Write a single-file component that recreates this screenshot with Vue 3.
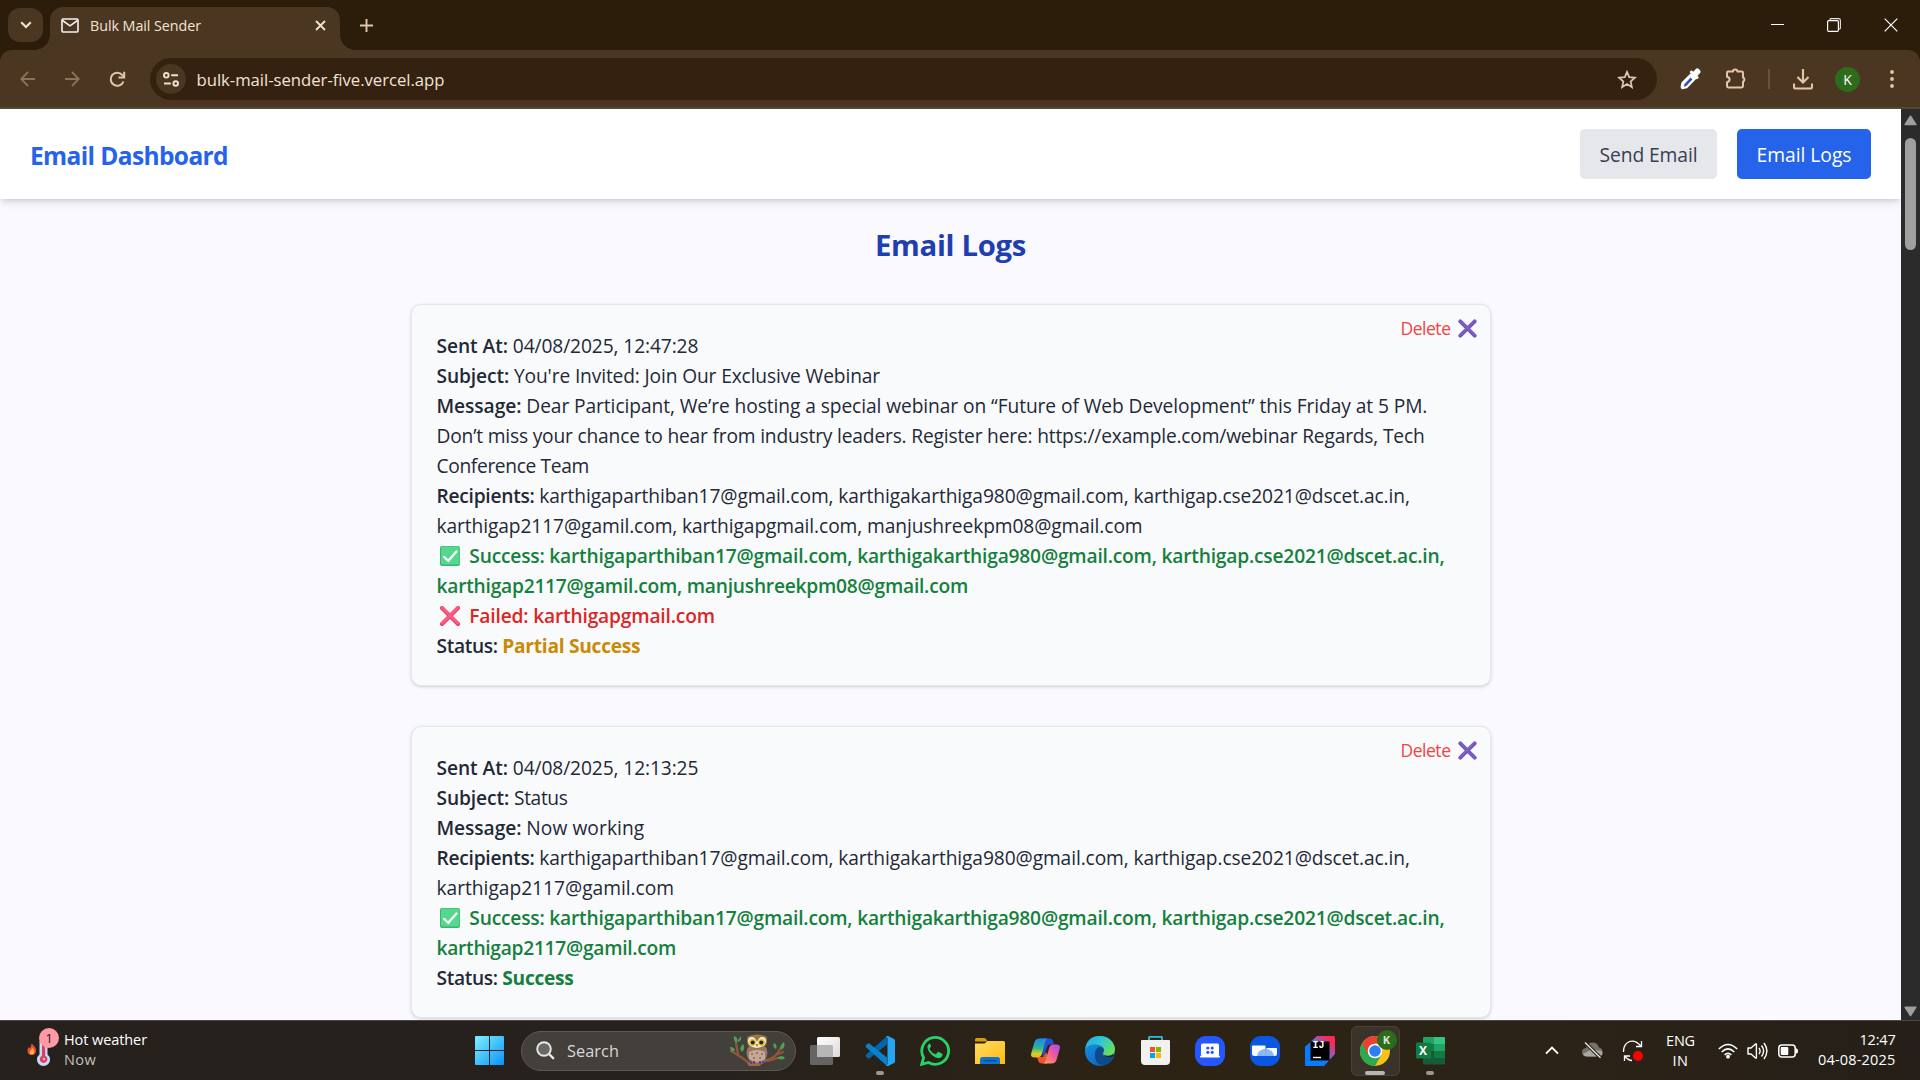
<script setup>
// Spreads the letters of a run so that it takes exactly the given width.
const vFit = {
  mounted(el, { value }) {
    const natural = el.getBoundingClientRect().width
    const count = Array.from(el.textContent).length
    el.style.letterSpacing = `${(value - natural) / count}px`
    el.style.width = `${value}px`
  }
}

const run = (text, w, kind = 'plain') => ({ text, w, kind })

const logs = [
  [
    [run('Sent At: ', 76.3, 'label'), run('04/08/2025, 12:47:28', 185.5)],
    [run('Subject: ', 77.5, 'label'), run("You're Invited: Join Our Exclusive Webinar", 366)],
    [
      run('Message: ', 89.8, 'label'),
      run('Dear Participant, We’re hosting a special webinar on “Future of Web Development” this Friday at 5 PM.', 901)
    ],
    [run('Don’t miss your chance to hear from industry leaders. Register here: https://example.com/webinar Regards, Tech', 988)],
    [run('Conference Team', 152.5)],
    [
      run('Recipients: ', 102.8, 'label'),
      run('karthigaparthiban17@gmail.com, karthigakarthiga980@gmail.com, karthigap.cse2021@dscet.ac.in,', 870.5)
    ],
    [run('karthigap2117@gamil.com, karthigapgmail.com, manjushreekpm08@gmail.com', 706)],
    [
      run('check', 0, 'icon'),
      run('Success: karthigaparthiban17@gmail.com, karthigakarthiga980@gmail.com, karthigap.cse2021@dscet.ac.in,', 975.2, 'good')
    ],
    [run('karthigap2117@gamil.com, manjushreekpm08@gmail.com', 531.5, 'good')],
    [run('cross', 0, 'icon'), run('Failed: karthigapgmail.com', 245.5, 'bad')],
    [run('Status: ', 65.8, 'medium'), run('Partial Success', 138, 'partial')]
  ],
  [
    [run('Sent At: ', 76.3, 'label'), run('04/08/2025, 12:13:25', 185.5)],
    [run('Subject: ', 77.5, 'label'), run('Status', 53.5)],
    [run('Message: ', 89.8, 'label'), run('Now working', 118)],
    [
      run('Recipients: ', 102.8, 'label'),
      run('karthigaparthiban17@gmail.com, karthigakarthiga980@gmail.com, karthigap.cse2021@dscet.ac.in,', 870.5)
    ],
    [run('karthigap2117@gamil.com', 237.5)],
    [
      run('check', 0, 'icon'),
      run('Success: karthigaparthiban17@gmail.com, karthigakarthiga980@gmail.com, karthigap.cse2021@dscet.ac.in,', 975.2, 'good')
    ],
    [run('karthigap2117@gamil.com', 239.5, 'good')],
    [run('Status: ', 65.8, 'medium'), run('Success', 71.3, 'done')]
  ]
]
</script>

<template>
  <div class="screen">
    <div class="tabstrip">
      <div class="tab-search">
        <svg width="12" height="8" viewBox="0 0 12 8"><path d="M1.2 1.2 6 6l4.800-4.800" fill="none" stroke="#f0dfd0" stroke-width="2.200" /></svg>
      </div>
      <div class="tab">
        <svg class="mail" width="18" height="15" viewBox="0 0 18 15"><rect x="1" y="1" width="16" height="13" rx="1" fill="none" stroke="#f4f4f4" stroke-width="1.600" /><path d="M1.500 2.500 9 7.800l7.500-5.300" fill="none" stroke="#f4f4f4" stroke-width="1.600" /></svg>
        <span class="tab-title"><span v-fit="111" class="fit">Bulk Mail Sender</span></span>
        <svg width="11" height="11" viewBox="0 0 11 11"><path d="m1 1 9 9M10 1l-9 9" stroke="#f3e3d5" stroke-width="1.800" /></svg>
      </div>
      <svg class="plus" width="13" height="13" viewBox="0 0 13 13"><path d="M6.500 0v13M0 6.500h13" stroke="#e4c5a8" stroke-width="1.900" /></svg>
      <div class="win">
        <svg width="13" height="13" viewBox="0 0 13 13"><path d="M0 5.500h13" stroke="#fff" /></svg>
        <svg width="14" height="14" viewBox="0 0 14 14"><path d="M3 2.500V1.500Q3 .6 4 .6h7.500q1.900 0 1.900 1.900V10q0 1-1 1h-1" fill="none" stroke="#e8e4e0" stroke-width="1.100" /><rect x=".6" y="2.600" width="10.800" height="10.800" rx="1.200" fill="none" stroke="#fff" stroke-width="1.200" /></svg>
        <svg width="14" height="14" viewBox="0 0 14 14"><path d="m.7.700 12.600 12.600M13.300.7.7 13.300" stroke="#fff" stroke-width="1.200" /></svg>
      </div>
    </div>

    <div class="toolbar">
      <svg class="nav" width="15" height="16" viewBox="0 0 15 16"><path d="M15 8H1.500M8 1 1.200 8 8 15" fill="none" stroke="#8b7258" stroke-width="1.800" /></svg>
      <svg class="nav" width="15" height="16" viewBox="0 0 15 16"><path d="M0 8h13.500M7 1l6.800 7L7 15" fill="none" stroke="#8b7258" stroke-width="1.800" /></svg>
      <svg class="nav" width="17" height="17" viewBox="0 0 17 17"><path d="M14.500 10.500A6.600 6.600 0 1 1 13.200 3.800L15 5.800" fill="none" stroke="#e4c5a8" stroke-width="2" /><path d="M15.200.8v5.700H9.500" fill="none" stroke="#e4c5a8" stroke-width="2" /></svg>
      <div class="omnibox">
        <div class="site">
          <svg width="16" height="15" viewBox="0 0 16 15" fill="none" stroke="#f0dfd0" stroke-width="1.900"><circle cx="3.300" cy="3.300" r="2.300" /><path d="M8.200 3.300H15M1 11.500h6.800" /><circle cx="12.700" cy="11.500" r="2.300" /></svg>
        </div>
        <span class="url"><span v-fit="248" class="fit">bulk-mail-sender-five.vercel.app</span></span>
        <svg width="20" height="19" viewBox="0 0 20 19"><path d="m10 1.900 2.200 5.300 5.700.5-4.300 3.800 1.300 5.600L10 14.100l-4.900 3 1.300-5.600L2.100 7.700l5.700-.5Z" fill="none" stroke="#dfc9b6" stroke-width="1.700" /></svg>
      </div>
      <svg class="dropper" width="21" height="22" viewBox="0 0 21 22"><path d="m11 6 4.500 4.500-8.700 9L2 20.500 1.300 19l.9-4.200Z" fill="#fff" stroke="#fff" stroke-width="1.500" stroke-linejoin="round" /><path d="m10.500 9.500 2 2-6.500 6.700-2 .3.300-2.300Z" fill="#3451c6" /><path d="m9.500 4 2-1.800 1.700 1.500 2.600-2.800q1.500-1.300 3.600.6 2 2 .7 3.600l-2.600 2.700 1.400 1.600-1.900 2Z" fill="#fff" /></svg>
      <svg class="puzzle" width="22" height="22" viewBox="0 0 22 22"><path d="M3.300 3.500h4.700a2.200 2 0 0 1 4.400 0h4.300q1.300 0 1.300 1.300V9.500a2 2.200 0 0 1 0 4.200v4.400q0 1.400-1.300 1.400H3.300Q2 19.500 2 18.100v-3.800q2.600-.7 2.600-2.800T2 8.800V4.800Q2 3.500 3.300 3.500Z" fill="none" stroke="#e4c5a8" stroke-width="2" stroke-linejoin="round" /></svg>
      <span class="divider"></span>
      <svg class="download" width="20" height="21" viewBox="0 0 20 21"><path d="M10 0v13M4.500 8l5.500 5.600L15.500 8M1 14.500V18q0 1.500 1.500 1.500h15Q19 19.500 19 18v-3.500" fill="none" stroke="#e4c5a8" stroke-width="2.100" /></svg>
      <span class="avatar">K</span>
      <svg class="dots" width="4" height="18" viewBox="0 0 4 18" fill="#e4c5a8"><circle cx="2" cy="2" r="1.900" /><circle cx="2" cy="9" r="1.900" /><circle cx="2" cy="16" r="1.900" /></svg>
    </div>

    <div class="viewport">
      <main class="page">
        <header class="header">
          <h1><span v-fit="198" class="fit">Email Dashboard</span></h1>
          <button class="btn"><span v-fit="98" class="fit">Send Email</span></button>
          <button class="btn primary"><span v-fit="95" class="fit">Email Logs</span></button>
        </header>
        <h2><span v-fit="151" class="fit">Email Logs</span></h2>
        <article v-for="(log, i) in logs" :key="i" class="card">
          <div class="delete">
            <span v-fit="50" class="fit">Delete</span>
            <svg width="19" height="19" viewBox="0 0 19 19"><path d="m2.300 2.300 14.400 14.400M16.700 2.300 2.300 16.700" stroke="#7b50c4" stroke-width="3.800" stroke-linecap="round" /><path d="m2.800 1.900 14 14M16.200 1.900l-14 14" stroke="#7665b5" stroke-width="2" stroke-linecap="round" /></svg>
          </div>
          <div v-for="(line, j) in log" :key="j" class="line">
            <template v-for="(part, k) in line" :key="k">
              <svg v-if="part.kind === 'icon' && part.text === 'check'" class="mark" width="20" height="20" viewBox="0 0 20 20"><rect width="20" height="20" rx="2" fill="#3cb371" /><rect x="1" y=".5" width="18.500" height="18" rx="1.500" fill="#55d88d" /><path d="m4 10.800 4.200 4L16.500 5.500" fill="none" stroke="#fff" stroke-width="2.200" stroke-linecap="round" /></svg>
              <svg v-else-if="part.kind === 'icon'" class="mark" width="20" height="20" viewBox="0 0 20 20"><path d="m2 2 16 16M18 2 2 18" stroke="#df3d68" stroke-width="4" stroke-linecap="round" /><path d="m2.300 1.700 15.500 15.600M17.700 1.700 2.200 17.300" stroke="#ff5c83" stroke-width="2.700" stroke-linecap="round" /></svg>
              <span v-else v-fit="part.w" class="fit" :class="part.kind">{{ part.text }}</span>
            </template>
          </div>
        </article>
      </main>
      <aside class="scrollbar">
        <svg width="13" height="11" viewBox="0 0 13 11"><path d="M6.500 1.200 11.800 9.500H1.200Z" fill="#9f9f9f" stroke="#9f9f9f" stroke-width="1.500" stroke-linejoin="round" /></svg>
        <span class="thumb"></span>
        <svg width="13" height="11" viewBox="0 0 13 11"><path d="M6.500 9.600 11.800 1.300H1.200Z" fill="#9f9f9f" stroke="#9f9f9f" stroke-width="1.500" stroke-linejoin="round" /></svg>
      </aside>
    </div>

    <footer class="taskbar">
      <div class="weather">
        <svg width="34" height="38" viewBox="0 0 34 38"><path d="M4.500 13.500q4.800 4 4.500 7.300Q8.800 25 4.800 25 .6 25 .5 20.700q0-2 1.300-3.700l1 1.300q1.700-1.800 1.700-4.800Z" fill="#e8502c" /><path d="M5.300 18q2.200 2 2 4T5 24.500 2.600 22Z" fill="#ffb545" /><path d="M12.500 11h8v13.500a6.500 6.500 0 1 1-8 0Z" fill="#c3dcf7" /><path d="M15 12h3.200v13.800a3.800 3.800 0 1 1-3.200 0Z" fill="#e43c60" /><circle cx="17" cy="29" r="1.300" fill="#ffb5c2" /></svg>
        <span class="count">1</span>
        <div class="forecast">
          <div><span v-fit="83" class="fit">Hot weather</span></div>
          <div class="dim"><span v-fit="32" class="fit">Now</span></div>
        </div>
      </div>

      <svg class="start" width="29" height="29" viewBox="0 0 29 29"><defs><linearGradient id="st" gradientUnits="userSpaceOnUse" x1="0" y1="0" x2="29" y2="29"><stop stop-color="#7df0ff" /><stop offset="1" stop-color="#0a93fb" /></linearGradient></defs><path d="M0 1q0-1 1-1h13v14H0ZM15 0h13q1 0 1 1v13H15ZM0 15h14v14H1q-1 0-1-1ZM15 15h14v13q0 1-1 1H15Z" fill="url(#st)" /></svg>

      <div class="search">
        <svg width="19" height="19" viewBox="0 0 19 19"><circle cx="8" cy="8" r="6.800" fill="#6b6966" stroke="#e9eaeb" stroke-width="1.900" /><path d="m12.900 12.900 5 5" stroke="#e9eaeb" stroke-width="2.200" /></svg>
        <span v-fit="52" class="fit">Search</span>
        <svg class="owl" width="56" height="34" viewBox="0 0 56 34"><path d="M1 17q12 7 18 12l8-1q16-2 20-8l4-7M8 20 6 9M46 21l7-3M38 27l10-3" fill="none" stroke="#8f5639" stroke-width="2.300" stroke-linecap="round" /><path d="M17 29q14-1 22-4l-10 7H19Z" fill="#a86743" /><path d="M4 2q5 2 3 7Q3 7 4 2ZM0 13q5 0 5 4-5 1-5-4ZM13 10q3 4-1 8-4-4 1-8ZM54 8q2 5-3 8-2-5 3-8ZM46 15q-4-2-2-6 4 2 2 6ZM47 24q5-4 8 0-3 3-8 0ZM8 6l3-4q1 5-3 6Z" fill="#48a257" /><ellipse cx="27" cy="19" rx="10.500" ry="10.500" fill="#97786a" /><path d="M19 18q8-4 16 0v7q-8 6-16 0Z" fill="#c5a794" /><path d="M17 5q0-3 2-3 8-3 16 0 2 0 2 3 1 10-10 10T17 5Z" fill="#9b7644" /><path d="M18 7q0-4 4-4 3 0 5 5 2-5 5-5 4 0 4 4 0 6-9 7-9-1-9-7Z" fill="#f4ecdb" /><circle cx="22.500" cy="8.500" r="3.400" fill="#e2c62f" /><circle cx="31.500" cy="8.500" r="3.400" fill="#e2c62f" /><circle cx="22.700" cy="8.500" r="2" fill="#2b2420" /><circle cx="31.300" cy="8.500" r="2" fill="#2b2420" /><path d="m25.500 10 1.500 3.500 1.500-3.500Z" fill="#b78443" /><path d="M21 27v3M24 27v3M30 27v3M33 27v3" stroke="#4f4b9a" stroke-width="2" /><path d="M22 19v2M27 18v2M32 19v2M24 23v2M30 23v2" stroke="#8a6b5c" stroke-width="1.500" /></svg>
      </div>

      <div class="apps">
        <div class="app"><svg width="30" height="28" viewBox="0 0 30 28"><defs><linearGradient id="tv" x2="1" y2="1"><stop stop-color="#fff" /><stop offset="1" stop-color="#dadada" /></linearGradient></defs><rect y="8" width="23" height="20" rx="1.500" fill="#646464" /><rect x="7" width="23" height="20" rx="1.500" fill="url(#tv)" /><path d="M7 8h14.500q1.500 0 1.500 1.500V20H8.500Q7 20 7 18.500Z" fill="#b6b6b6" /></svg></div>
        <div class="app"><svg width="30" height="30" viewBox="0 0 30 30"><path d="M22 0 1 18.800q-1 1 0 2l1.700 1.500q1 .8 2 0L22 8.500Z" fill="#0065a9" /><path d="M22 30 1 11.200q-1-1 0-2l1.700-1.500q1-.8 2 0L22 21.500Z" fill="#0a7fcc" /><path d="M21 29.500q1.500 1 2.700.2l5.300-2.600q1-.5 1-1.600v-21q0-1.100-1-1.600L23.700.3Q22.500-.5 21 .5 22.500 1 22.500 2.500v25q0 1.500-1.500 2Z" fill="#25a5f3" /></svg><i class="dot"></i></div>
        <div class="app"><svg width="30" height="30" viewBox="0 0 30 30"><path d="M1.700 28.300 3.600 21.600A13.400 13.400 0 1 1 8.500 26.500Z" fill="none" stroke="#25d366" stroke-width="2.800" /><path d="M10.500 7.600c-.8 0-3 1.500-2.400 4.600.8 4.200 5.200 8.800 9.800 10 3 .7 5.300-1.300 5.200-3.500 0-.5-.3-.7-.8-1l-3-1.500c-.6-.3-1-.1-1.400.4l-1.200 1.500c-.4.400-.7.400-1.200.2-2.400-1-4.100-2.700-5.300-4.900-.2-.4-.1-.7.200-1.100l1-1.300c.2-.3.200-.6.100-1l-1.300-2.900c-.2-.4-.3-.5-.7-.5Z" transform="translate(-.5 -.2)" fill="#25d366" /></svg></div>
        <div class="app"><svg width="30" height="26" viewBox="0 0 30 26"><defs><linearGradient id="fd" x2="1" y2="1"><stop stop-color="#ffdc61" /><stop offset="1" stop-color="#fbbb13" /></linearGradient></defs><path d="M0 1.500Q0 0 1.500 0H9q1.300 0 2 1l1.500 2.500H0Z" fill="#dc9a06" /><path d="M0 5.500h9.500L12.500 3H28.500Q30 3 30 4.500V26H0Z" fill="url(#fd)" /><path d="M5 26v-4.500Q5 19 7.500 19h15q2.500 0 2.500 2.500V26Z" fill="#1273cf" /><path d="M8.500 22.700h13" stroke="#0b4f94" stroke-width="1.500" /></svg></div>
        <div class="app"><svg width="29" height="26" viewBox="0 0 29 26"><defs><linearGradient id="ca" x1="0" y1="0" x2="0" y2="1"><stop stop-color="#178bf0" /><stop offset=".5" stop-color="#2fb58b" /><stop offset=".8" stop-color="#d6cf27" /><stop offset="1" stop-color="#f5b30a" /></linearGradient><linearGradient id="cb" x1="1" y1="0" x2="0" y2="1"><stop stop-color="#a74bf0" /><stop offset=".5" stop-color="#f45a96" /><stop offset="1" stop-color="#ffad59" /></linearGradient></defs><path d="M9 .5h10q2 0 2.700 2l1.300 4h-4q-2 0-2.700 2L12 20Z" fill="#2350d7" /><path d="M6 19h6l3-5 3 6-2 5.500h-5Q8 25.500 7.200 23Z" fill="#f0522b" /><path d="M8.500.5H17q-2 .5-2.700 3L11 15.500q-1 4-4.500 4H3.500Q-1 19.500.3 15L3.500 4Q4.500.5 8.500.5Z" fill="url(#ca)" /><path d="M20.500 25.500H12q2-.5 2.700-3L18 10.500q1-4 4.500-4h3q4.500 0 3.200 4.500l-3.200 11q-1 3.500-5 3.500Z" fill="url(#cb)" /></svg></div>
        <div class="app"><svg width="30" height="30" viewBox="0 0 30 30"><defs><linearGradient id="ea" x1="0" y1="0" x2="1" y2=".6"><stop stop-color="#22a7e8" /><stop offset=".5" stop-color="#31c6d6" /><stop offset="1" stop-color="#68e05a" /></linearGradient><linearGradient id="eb" x2=".7" y2="1"><stop stop-color="#189ae0" /><stop offset="1" stop-color="#0a62c4" /></linearGradient></defs><circle cx="15" cy="15" r="15" fill="url(#eb)" /><path d="M10 17q1-6 5-6 4 0 4 3.500 0 1.500-1 2.500-1 2.500 3 3.500 4 1 6.500-.5 1 0 .5 1.500-4 7-10.500 8Q9 28.500 10 17Z" fill="#114a8c" /><path d="M.2 13Q2 0 15 0q8 0 12.500 6 2.500 4 2.500 7 0 7-7.500 7-5.500 0-5-2.500 2-1.500 1.500-4Q18 9 11 8.500 3 8 .2 13Z" fill="url(#ea)" /><path d="M28 20.500Q23 22.500 19 19.500q-2-1.500-1.300-2.500.5 2.500 5 2.800 3 .2 5-1.500L30 20Z" fill="#2a2317" /></svg></div>
        <div class="app"><svg width="29" height="29" viewBox="0 0 29 29"><path d="M8 6V1.500Q8 .8 8.800.8h11.400q.8 0 .8.700V6" fill="none" stroke="#28bce8" stroke-width="1.800" /><path d="M0 5q0-1 1-1h27q1 0 1 1v20q0 4-4 4H4q-4 0-4-4Z" fill="#f1f1f1" /><path d="M9 11h5v5H9Z" fill="#f25022" /><path d="M15 11h5v5h-5Z" fill="#7fba00" /><path d="M9 17h5v5H9Z" fill="#00a4ef" /><path d="M15 17h5v5h-5Z" fill="#ffb900" /></svg></div>
        <div class="app"><svg width="30" height="30" viewBox="0 0 30 30"><rect width="30" height="30" rx="11" fill="#2457ff" /><rect x="6" y="7.500" width="18" height="12.500" rx="1.500" fill="#fff" /><path d="M5 19.800h20v.7q0 1-1 1H6q-1 0-1-1Z" fill="#fff" /><g fill="#2457ff"><circle cx="12.800" cy="12" r="1.600" /><circle cx="17.200" cy="12" r="1.600" /><circle cx="12.800" cy="16.300" r="1.600" /><circle cx="17.200" cy="16.300" r="1.600" /></g></svg></div>
        <div class="app"><svg width="30" height="30" viewBox="0 0 30 30"><defs><clipPath id="zc"><path d="M2 9.500h13.500V20H2ZM16.500 12H27v8H16.500Z" /></clipPath></defs><rect width="30" height="30" rx="11" fill="#0b57e3" /><path d="M2 10.500Q2 9.500 3 9.500h11.500q1 0 1 1V20h-11Q2 20 2 17.500ZM16.500 12h9.500q1 0 1 1v4.500q0 2.500-2.500 2.500h-8Z" fill="#fff" /><circle cx="15.500" cy="21.500" r="8.800" fill="#8bb9f5" clip-path="url(#zc)" /></svg></div>
        <div class="app"><svg width="30" height="30" viewBox="0 0 30 30"><defs><linearGradient id="ij" x1="0" y1="1" x2="1" y2="0"><stop offset=".35" stop-color="#087cfa" /><stop offset=".55" stop-color="#6b6fd8" /><stop offset=".85" stop-color="#fe2857" /></linearGradient></defs><path d="M12 0h16.500Q30 0 30 1.500V18L19 30H1.500Q0 30 0 28.500V11Z" fill="url(#ij)" /><path d="M0 11 6 6v19h16l-3 5H1.500Q0 30 0 28.500Z" fill="#087cfa" /><rect x="5.500" y="5.500" width="19" height="19" /><path d="M8 21.500h8" stroke="#fff" stroke-width="1.400" /></svg><b class="ij">IJ</b></div>
        <div class="app active"><svg width="30" height="30" viewBox="0 0 30 30"><circle cx="15" cy="15" r="15" fill="#fbc116" /><path d="M15 15 2 7.500A15 15 0 0 0 15 30l6.500-11.200Z" fill="#2da94f" /><path d="M2 7.500A15 15 0 0 1 28 7.500H15v7.500L8.500 18.800Z" fill="#e94235" /><circle cx="15" cy="15" r="7.300" fill="#fff" /><circle cx="15" cy="15" r="5.800" fill="#2f7df0" /></svg><b class="profile">K</b><i class="dot wide"></i></div>
        <div class="app"><svg width="29" height="28" viewBox="0 0 29 28"><path d="M8 0h10v14H7V1q0-1 1-1Z" fill="#21a366" /><path d="M18 0h10q1 0 1 1v6H18Z" fill="#33c481" /><path d="M7 7h11v7H7Z" fill="#107c41" /><path d="M18 7h11v7H18Z" fill="#21a366" /><path d="M7 14h11v7H7Z" fill="#185c37" /><path d="M18 14h11v7H18Z" fill="#107c41" /><path d="M7 21h22v5.500q0 1-1 1H8q-1 0-1-1Z" fill="#185c37" /><rect y="5.500" width="15" height="16" rx="1" fill="#107c41" /></svg><b class="xl">X</b><i class="dot"></i></div>
      </div>

      <div class="tray">
        <svg class="t-up" width="14" height="9" viewBox="0 0 14 9"><path d="m1 7.700 6-6 6 6" fill="none" stroke="#fff" stroke-width="1.900" /></svg>
        <svg class="t-cloud" width="21" height="17" viewBox="0 0 21 17"><path d="M5 14.500q-5 0-5-4.500 0-3.500 4-4Q6 .5 10.500.5q5 0 6.500 5 3.500.7 3.500 4.500 0 4.500-5 4.500Z" fill="#74706a" /><path d="M1 12 9 7.500l11 1.500q2 5.500-4.500 5.500H5q-3 0-4-2.500Z" fill="#aaa7a3" /><path d="m3 .5 15.500 15.300" stroke="#2a2118" stroke-width="3.500" /><path d="m3 .5 15.500 15.300" stroke="#e8e6e4" stroke-width="1.400" /></svg>
        <svg class="t-sync" width="22" height="22" viewBox="0 0 22 22"><path d="M1.500 12q-.2-8 6-10.500 6-1.800 11.500 4.500M19.500 1v5.500H14M2.500 21v-5H8M3 16.500q3.500 4 7 4" fill="none" stroke="#fff" stroke-width="1.300" /><circle cx="16" cy="16" r="5" fill="#fe0000" /></svg>
        <div class="lang"><span v-fit="29" class="fit">ENG</span><span v-fit="16" class="fit">IN</span></div>
        <svg class="t-wifi" width="20" height="16" viewBox="0 0 20 16"><path d="M.8 6Q10-3 19.200 6M3.700 9q6.300-6.200 12.600 0M6.600 12q3.400-3.300 6.800 0" fill="none" stroke="#fff" stroke-width="1.500" /><circle cx="10" cy="13.700" r="1.900" fill="#fff" /></svg>
        <svg class="t-vol" width="21" height="18" viewBox="0 0 21 18"><path d="M1 6h3l4.500-4q.9-.6.900.5v13q0 1.100-.9.500L4 12H1Z" fill="none" stroke="#fff" stroke-width="1.400" stroke-linejoin="round" /><path d="M12 5.800q2.200 3.200 0 6.400M14.500 3.500q4.200 5.500 0 11M17 1q5.800 8 0 16" fill="none" stroke="#fff" stroke-width="1.400" /></svg>
        <svg class="t-bat" width="20" height="14" viewBox="0 0 20 14"><rect x=".8" y="1" width="16.400" height="12" rx="3" fill="none" stroke="#fff" stroke-width="1.500" /><rect x="2.700" y="3" width="7.600" height="8" rx="1" fill="#fff" /><path d="M18 4.500h.7q1.300 0 1.300 2.500t-1.300 2.500H18Z" fill="#fff" /></svg>
        <div class="clock"><span v-fit="36" class="fit">12:47</span><span v-fit="77.500" class="fit">04-08-2025</span></div>
      </div>
    </footer>
  </div>
</template>

<style>
html,
body {
  background: #faf9ff;
  overflow: hidden;
}
</style>

<style scoped>
* {
  box-sizing: border-box;
}
.screen {
  width: 1920px;
  height: 1080px;
  overflow: hidden;
  display: flex;
  flex-direction: column;
  background: #2c1c0a;
  font-family: "Open Sans", "Noto Sans", sans-serif;
}
svg {
  display: block;
  flex: none;
}
.fit {
  display: inline-block;
  white-space: pre;
  flex: none;
}

/* browser frame */
.tabstrip {
  height: 50px;
  flex: none;
  display: flex;
  align-items: center;
  padding: 0 29px 0 8px;
}
.tab-search {
  width: 35px;
  height: 34px;
  border-radius: 12px;
  background: #4b3621;
  display: flex;
  align-items: center;
  justify-content: center;
}
.tab {
  position: relative;
  align-self: flex-end;
  width: 290px;
  height: 43px;
  margin-left: 7px;
  padding: 0 14px 7px 11px;
  border-radius: 13px 13px 0 0;
  background: #4b3621;
  display: flex;
  align-items: center;
}
.tab::before,
.tab::after {
  content: "";
  position: absolute;
  bottom: 0;
  width: 15px;
  height: 15px;
}
.tab::before {
  left: -15px;
  background: radial-gradient(circle at 0 0, transparent 14.5px, #4b3621 15px);
}
.tab::after {
  right: -15px;
  background: radial-gradient(circle at 100% 0, transparent 14.5px, #4b3621 15px);
}
.tab-title {
  flex: 1;
  padding: 2px 0 0 11px;
  font-size: 14.3px;
  line-height: 20px;
  color: #f3e3d5;
}
.plus {
  margin-left: 20px;
}
.win {
  margin: 0 -7px 0 auto;
  display: flex;
  align-items: center;
  gap: 43px;
}
.toolbar {
  height: 59px;
  flex: none;
  display: flex;
  align-items: center;
  padding: 1px 26px 0 20px;
  background: #4b3621;
  border-bottom: 2px solid #54463a;
  border-radius: 12px 12px 0 0;
}
.nav + .nav {
  margin-left: 29.5px;
}
.omnibox {
  width: 1507px;
  height: 42px;
  margin-left: 24px;
  border-radius: 21px;
  background: #34210f;
  display: flex;
  align-items: center;
  padding: 0 20px 0 6px;
}
.site {
  width: 30px;
  height: 30px;
  border-radius: 50%;
  background: #4b3621;
  display: flex;
  align-items: center;
  justify-content: center;
}
.url {
  flex: 1;
  padding: 1px 0 0 10.5px;
  font-size: 16.700px;
  line-height: 24px;
  color: #f3e3d5;
}
.dropper {
  margin-left: 23px;
}
.puzzle {
  margin-left: 24px;
}
.divider {
  width: 2px;
  height: 20px;
  margin-left: 21px;
  background: #6b523b;
}
.download {
  margin-left: 23px;
}
.avatar {
  width: 25px;
  height: 25px;
  margin-left: 22px;
  border-radius: 50%;
  background: #2f6b1d;
  color: #fff;
  font-size: 14px;
  line-height: 25px;
  text-align: center;
}
.dots {
  margin-left: auto;
}

/* page */
.viewport {
  flex: 1;
  min-height: 0;
  display: flex;
}
.page {
  width: 1901px;
  overflow: hidden;
  background: #faf9ff;
  display: flex;
  flex-direction: column;
  align-items: center;
}
.header {
  width: 100%;
  height: 90px;
  flex: none;
  display: flex;
  align-items: center;
  gap: 20px;
  padding: 0 30px;
  background: #fff;
  box-shadow: 0 5px 8px -1px rgba(0, 0, 0, 0.1), 0 2px 5px -2px rgba(0, 0, 0, 0.15);
}
h1 {
  flex: 1;
  margin: 2px 0 0;
  font-size: 24.500px;
  line-height: 35px;
  color: #2563eb;
}
.btn {
  height: 50px;
  padding: 2px 19.500px 0;
  border: 0;
  border-radius: 5px;
  background: #e5e7eb;
  color: #374151;
  font: 19.300px/30px "Open Sans", "Noto Sans", sans-serif;
}
.primary {
  background: #2563eb;
  color: #fff;
}
h2 {
  flex: none;
  margin: 26px 0 39px;
  font-size: 29.300px;
  line-height: 40px;
  color: #1e40af;
}
.card {
  position: relative;
  width: 1080px;
  flex: none;
  margin-bottom: 40px;
  padding: 26px 25px 24px;
  border: 1px solid #e5e7eb;
  border-radius: 10px;
  background: #f9fafb;
  box-shadow: 0 1px 4px rgba(0, 0, 0, 0.1), 0 1px 2px rgba(0, 0, 0, 0.08);
}
.line {
  height: 30px;
  display: flex;
  align-items: center;
  font-size: 19.200px;
  line-height: 30px;
  color: #1f2937;
}
.label {
  font-weight: 600;
}
.medium {
  font-weight: 600;
}
.good {
  font-weight: 600;
  color: #15803d;
}
.bad {
  font-weight: 600;
  color: #dc2626;
}
.partial {
  font-weight: 700;
  color: #ca8a04;
}
.done {
  font-weight: 700;
  color: #15803d;
}
.mark {
  margin: 0 9.300px 0 3.500px;
}
.delete {
  position: absolute;
  top: 11px;
  right: 13px;
  display: flex;
  align-items: center;
  gap: 7px;
  font-size: 17.5px;
  line-height: 25px;
  color: #ef4444;
}
.scrollbar {
  width: 19px;
  background: #2b2b2b;
  display: flex;
  flex-direction: column;
  align-items: center;
  padding: 6px 0 3px;
}
.thumb {
  width: 11px;
  height: 112px;
  margin: 12px 0 auto;
  border-radius: 6px;
  background: #9f9f9f;
}

/* taskbar */
.taskbar {
  height: 60px;
  flex: none;
  display: flex;
  align-items: center;
  border-top: 1px solid #4a4744;
  background: linear-gradient(90deg, #26211d 0, #27211d 38%, #2c2314 58%, #2b2316 80%, #261f19 100%);
  color: #fff;
  font-size: 14.500px;
}
.weather {
  position: relative;
  width: 475px;
  height: 59px;
  padding: 9px 0 0 27px;
  display: flex;
}
.count {
  position: absolute;
  left: 39px;
  top: 7px;
  width: 20px;
  height: 20px;
  border-radius: 50%;
  background: #ff99a4;
  color: #2a1a1c;
  font-size: 13.500px;
  line-height: 20px;
  text-align: center;
}
.forecast {
  margin-left: 3px;
  line-height: 20px;
}
.dim {
  color: #c3c0bd;
}
.search {
  width: 275px;
  height: 40px;
  margin: 0 1.500px 0 17px;
  padding: 0 9px 0 14px;
  border: 1px solid #5c5955;
  border-radius: 20px;
  background: #433f3b;
  display: flex;
  align-items: center;
  font-size: 16.300px;
  line-height: 24px;
  color: #dad8d5;
}
.search .fit {
  margin-left: 12px;
}
.owl {
  margin-left: auto;
}
.apps {
  display: flex;
}
.app {
  position: relative;
  width: 55px;
  height: 50px;
  display: flex;
  align-items: center;
  justify-content: center;
}
.active::before {
  content: "";
  position: absolute;
  inset: 0 3px;
  border: 1px solid #48423a;
  border-radius: 6px;
  background: #3a332a;
}
.active svg {
  position: relative;
}
.dot {
  position: absolute;
  bottom: 1px;
  left: 23.500px;
  width: 8px;
  height: 4px;
  border-radius: 2px;
  background: #9b9793;
}
.wide {
  left: 17.500px;
  width: 20px;
  background: #b8b5b2;
}
.ij {
  position: absolute;
  left: 20px;
  top: 14px;
  font: 700 10px/12px "Liberation Mono", monospace;
}
.profile {
  position: absolute;
  left: 29px;
  top: 4px;
  width: 20px;
  height: 20px;
  border-radius: 50%;
  background: #2f6b1d;
  color: #d5e8cf;
  font-size: 11px;
  line-height: 20px;
  text-align: center;
}
.xl {
  position: absolute;
  left: 13px;
  top: 17px;
  width: 15px;
  font-size: 12px;
  line-height: 16px;
  text-align: center;
}
.tray {
  flex: 1;
  display: flex;
  align-items: center;
}
.t-up {
  margin-left: 87.5px;
}
.t-cloud {
  margin-left: 23px;
}
.t-sync {
  margin-left: 19px;
}
.lang {
  width: 40px;
  margin-left: 16.5px;
  display: flex;
  flex-direction: column;
  align-items: center;
  line-height: 20px;
}
.t-wifi {
  margin-left: 17px;
}
.t-vol {
  margin-left: 9px;
}
.t-bat {
  margin-left: 10px;
}
.clock {
  margin: -1px 24.5px 0 auto;
  display: flex;
  flex-direction: column;
  align-items: flex-end;
  line-height: 20px;
}
</style>
